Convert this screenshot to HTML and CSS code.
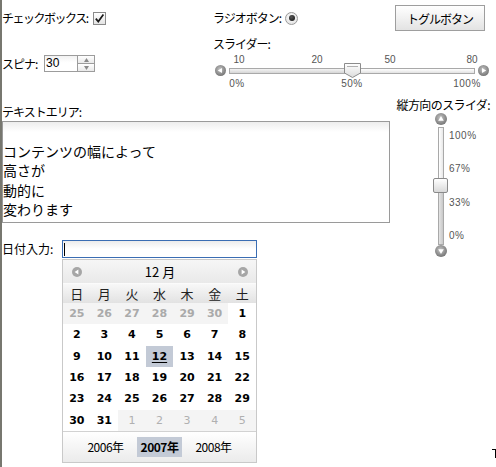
FILE: index.html
```html
<!DOCTYPE html>
<html>
<head>
<meta charset="utf-8">
<link rel="stylesheet" href="styles.css">
</head>
<body>
<div class="page">
  <div class="top">
    <div class="col-left">
      <div class="row-check">
        <span class="lbl lbl-check">チェックボックス:</span>
        <span class="checkbox"><svg width="11" height="11" viewBox="0 0 11 11"><path d="M1.8,5.6 L4.3,8.6 L9.4,1.6" fill="none" stroke="#1a1a1a" stroke-width="1.7"/></svg></span>
      </div>
      <div class="row-spin">
        <span class="lbl lbl-spin">スピナ:</span>
        <span class="spinner">
          <span class="spin-val">30</span>
          <span class="spin-btns">
            <span class="spin-up"><svg width="5" height="4" viewBox="0 0 5 4"><polygon points="2.5,0 5,4 0,4" fill="#8a8a8a"/></svg></span>
            <span class="spin-down"><svg width="5" height="4" viewBox="0 0 5 4"><polygon points="0,0 5,0 2.5,4" fill="#8a8a8a"/></svg></span>
          </span>
        </span>
      </div>
    </div>
    <div class="col-right">
      <div class="row-radio">
        <div class="radio-wrap">
          <span class="lbl">ラジオボタン:</span>
          <span class="radio"><span class="radio-dot"></span></span>
        </div>
        <button class="toggle">トグルボタン</button>
      </div>
      <div class="lbl slider-lbl">スライダー:</div>
      <div class="hslider">
        <div class="hs-ticks">
          <span style="left:24px">10</span>
          <span style="left:102px">20</span>
          <span style="left:175px">50</span>
          <span style="left:257px">80</span>
        </div>
        <div class="hs-track-row">
          <svg class="hs-arrow" width="11" height="11" viewBox="0 0 11 11"><defs><radialGradient id="ga" cx="0.45" cy="0.4" r="0.6"><stop offset="0" stop-color="#c4c4c4"/><stop offset="1" stop-color="#767676"/></radialGradient></defs><circle cx="5.5" cy="5.5" r="5.5" fill="url(#ga)"/><polygon points="2.8,5.5 7,3 7,8" fill="#fff"/></svg>
          <div class="hs-track">
            <div class="hs-fill"></div>
            <svg class="hs-thumb" width="17" height="15" viewBox="0 0 17 15"><defs><linearGradient id="gt" x1="0" y1="0" x2="0" y2="1"><stop offset="0" stop-color="#ffffff"/><stop offset="1" stop-color="#dcdcdc"/></linearGradient></defs><path d="M0.5,0.5 H16.5 V10 L8.5,14.5 L0.5,10 Z" fill="url(#gt)" stroke="#8c8c8c"/><line x1="3" y1="3.5" x2="14" y2="3.5" stroke="#b0b0b0"/></svg>
          </div>
          <svg class="hs-arrow" width="11" height="11" viewBox="0 0 11 11"><circle cx="5.5" cy="5.5" r="5.5" fill="url(#ga)"/><polygon points="8.2,5.5 4,3 4,8" fill="#fff"/></svg>
        </div>
        <div class="hs-labels">
          <span style="left:22px">0%</span>
          <span style="left:137px">50%</span>
          <span style="left:252px">100%</span>
        </div>
      </div>
    </div>
  </div>

  <div class="main">
    <div class="ta-col">
      <div class="lbl">テキストエリア:</div>
      <div class="textarea"><br>コンテンツの幅によって<br>高さが<br>動的に<br>変わります</div>
    </div>

    <div class="vs-col">
      <div class="lbl vs-lbl">縦方向のスライダ:</div>
      <div class="vslider">
        <svg width="12" height="12" viewBox="0 0 12 12"><defs><radialGradient id="gb" cx="0.45" cy="0.4" r="0.6"><stop offset="0" stop-color="#c4c4c4"/><stop offset="1" stop-color="#767676"/></radialGradient></defs><circle cx="6" cy="6" r="6" fill="url(#gb)"/><polygon points="6,3 3.2,7.8 8.8,7.8" fill="#fff"/></svg>
        <div class="vs-track">
          <div class="vs-upper"></div>
          <div class="vs-lower"></div>
        </div>
        <svg width="12" height="12" viewBox="0 0 12 12"><circle cx="6" cy="6" r="6" fill="url(#gb)"/><polygon points="6,9 3.2,4.2 8.8,4.2" fill="#fff"/></svg>
        <div class="vs-thumb"></div>
        <span class="vs-label" style="top:17px">100%</span>
        <span class="vs-label" style="top:50px">67%</span>
        <span class="vs-label" style="top:84px">33%</span>
        <span class="vs-label" style="top:117px">0%</span>
      </div>
    </div>

    <div class="date-row">
      <span class="lbl-date">日付入力:</span>
      <span class="date-input"><span class="caret"></span></span>
    </div>

    <div class="calendar">
      <div class="cal-head">
        <svg width="10" height="10" viewBox="0 0 10 10"><circle cx="5" cy="5" r="5" fill="#a6a6a6"/><polygon points="2.6,5 6.4,2.6 6.4,7.4" fill="#fff"/></svg>
        <span class="cal-month">12 月</span>
        <svg width="10" height="10" viewBox="0 0 10 10"><circle cx="5" cy="5" r="5" fill="#a6a6a6"/><polygon points="7.4,5 3.6,2.6 3.6,7.4" fill="#fff"/></svg>
      </div>
      <div class="cal-days">
        <span>日</span><span>月</span><span>火</span><span>水</span><span>木</span><span>金</span><span>土</span>
      </div>
      <div class="cal-grid">
        <span class="prev">25</span><span class="prev">26</span><span class="prev">27</span><span class="prev">28</span><span class="prev">29</span><span class="prev">30</span><span>1</span>
        <span>2</span><span>3</span><span>4</span><span>5</span><span>6</span><span>7</span><span>8</span>
        <span>9</span><span>10</span><span>11</span><span class="sel"><u>12</u></span><span>13</span><span>14</span><span>15</span>
        <span>16</span><span>17</span><span>18</span><span>19</span><span>20</span><span>21</span><span>22</span>
        <span>23</span><span>24</span><span>25</span><span>26</span><span>27</span><span>28</span><span>29</span>
        <span>30</span><span>31</span><span class="next">1</span><span class="next">2</span><span class="next">3</span><span class="next">4</span><span class="next">5</span>
      </div>
      <div class="cal-foot">
        <span class="yr">2006年</span>
        <span class="yr cur">2007年</span>
        <span class="yr">2008年</span>
      </div>
    </div>
  </div>
  <div class="corner"></div>
</div>
</body>
</html>
```

FILE: styles.css
```css
* { box-sizing: border-box; }
html, body { margin: 0; padding: 0; background: #fff; }
body {
  font-family: "Noto Sans CJK JP", "Liberation Sans", sans-serif;
  font-size: 12px;
  color: #000;
}
.page {
  width: 496px;
  height: 467px;
  border-left: 2px solid #77776f;
  position: relative;
  overflow: hidden;
}
.lbl { letter-spacing: -1px; line-height: 14px; white-space: nowrap; }

/* top area */
.top { display: grid; grid-template-columns: 211px 283px; height: 97px; }

.row-check { margin-top: 11px; height: 14px; display: flex; align-items: center; }
.lbl-check { width: 91px; letter-spacing: -1.5px; }
.checkbox {
  width: 13px; height: 13px;
  border: 1px solid #8a8a8a;
  background: linear-gradient(#ffffff, #e4e4e4);
  display: flex; align-items: center; justify-content: center;
}

.row-spin { margin-top: 30px; height: 17px; display: flex; align-items: center; }
.lbl-spin { width: 42px; }
.spinner { display: flex; width: 51px; height: 17px; border: 1px solid #9c9c9c; }
.spin-val {
  flex: 1;
  padding-left: 1px;
  font-family: "Liberation Sans", sans-serif;
  font-size: 12px;
  line-height: 15px;
  background: linear-gradient(#f2f2f2, #ffffff 45%);
}
.spin-btns { width: 17px; border-left: 1px solid #9c9c9c; display: flex; flex-direction: column; }
.spin-btns span {
  flex: 1; display: flex; align-items: center; justify-content: center;
  background: linear-gradient(#ffffff, #e9e9e9);
}
.spin-up { border-bottom: 1px solid #9c9c9c; }

.row-radio {
  margin-top: 5px; height: 26px;
  display: flex; align-items: center; justify-content: space-between;
  padding-right: 11px;
}
.radio-wrap { display: flex; align-items: center; }
.radio {
  margin-left: 4px;
  width: 13px; height: 13px;
  border-radius: 50%;
  border: 1px solid #9a9a9a;
  background: radial-gradient(circle at 50% 40%, #ffffff, #dcdcdc);
  display: flex; align-items: center; justify-content: center;
}
.radio-dot {
  width: 6px; height: 6px; border-radius: 50%;
  background: radial-gradient(circle at 40% 35%, #555, #111);
}
.toggle {
  width: 90px; height: 26px;
  border: 1px solid #9e9e9e;
  border-radius: 0;
  background: linear-gradient(#ffffff, #e3e3e3);
  font-family: "Noto Sans CJK JP", sans-serif;
  font-size: 12px;
  letter-spacing: -1px;
  color: #000;
  padding: 0;
}
.slider-lbl { margin-top: 6px; }

.hslider { position: relative; margin-left: 2px; margin-top: 4px; width: 274px; }
.hs-ticks, .hs-labels { position: relative; }
.hs-ticks { height: 8px; }
.hs-labels { height: 11px; }
.hs-ticks span, .hs-labels span {
  position: absolute; top: 0;
  transform: translateX(-50%);
  font-family: "Liberation Sans", sans-serif;
  font-size: 10px; line-height: 10px;
  color: #555;
}
.hs-labels span { line-height: 11px; letter-spacing: 0.5px; }
.hs-track-row { display: flex; align-items: center; height: 15px; gap: 3px; }
.hs-arrow { display: block; flex: none; }
.hs-track {
  position: relative;
  width: 246px; height: 6px;
  border: 1px solid #a9a9a9;
  background: linear-gradient(#ffffff, #e2e2e2);
}
.hs-fill { width: 115px; height: 100%; background: linear-gradient(#f4f4f4, #d6d6d6); }
.hs-thumb { position: absolute; left: 114px; top: -6px; display: block; }

/* main area */
.main {
  display: grid;
  grid-template-columns: 388px 100px;
  grid-template-rows: 126px 35px auto;
}
.ta-col { grid-column: 1; grid-row: 1; padding-top: 8px; }
.textarea {
  margin-top: 2px;
  height: 102px;
  border: 1px solid #9a9a9a;
  background: linear-gradient(#ededed, #ffffff 10px);
  font-size: 14px;
  line-height: 19.5px;
  padding-left: 0;
  white-space: nowrap;
}

.vs-col { grid-column: 2; grid-row: 1 / span 2; padding-top: 1px; }
.vs-lbl { text-align: right; letter-spacing: -0.6px; }
.vslider {
  position: relative;
  margin-left: 43px; margin-top: 1px;
  width: 15px;
  display: flex; flex-direction: column; align-items: center;
}
.vslider svg { display: block; }
.vs-track {
  margin: 2px 0 0;
  width: 6px; height: 118px;
  border: 1px solid #a9a9a9;
  display: flex; flex-direction: column;
}
.vs-upper { height: 52px; background: linear-gradient(90deg, #ffffff, #e8e8e8); }
.vs-lower { flex: 1; background: linear-gradient(90deg, #e4e4e4, #c8c8c8); }
.vs-thumb {
  position: absolute; left: 0; top: 65px;
  width: 15px; height: 15px;
  border: 1px solid #8a8a8a;
  border-radius: 2px;
  background: linear-gradient(#ffffff, #d9d9d9);
}
.vs-label {
  position: absolute; left: 16px;
  font-family: "Liberation Sans", sans-serif;
  font-size: 10px; line-height: 11px;
  color: #555; letter-spacing: 0.5px;
  white-space: nowrap;
}

.date-row { grid-column: 1; grid-row: 2; padding-top: 17px; display: flex; align-items: center; height: 35px; }
.lbl-date { width: 60px; line-height: 18px; white-space: nowrap; }
.date-input {
  width: 195px; height: 18px;
  border: 1px solid #3a6db3;
  background: linear-gradient(#ececec, #ffffff 8px);
  display: flex; align-items: center;
  padding-left: 1px;
}
.caret { width: 1px; height: 13px; background: #000; }

.calendar {
  grid-column: 1; grid-row: 3;
  margin-left: 60px; margin-top: 1px;
  width: 195px;
  border: 1px solid #c9c9c9;
}
.cal-head {
  height: 23px;
  display: flex; align-items: center; justify-content: space-between;
  padding: 0 8px 0 9px;
  background: linear-gradient(#f6f6f6, #e9e9e9);
}
.cal-head svg { display: block; }
.cal-month { font-size: 13px; line-height: 16px; }
.cal-days {
  height: 20px;
  display: grid; grid-template-columns: repeat(7, 1fr);
  align-items: center;
  border-top: 1px solid #fbfbfb;
  background: linear-gradient(#f8f8f8, #e2e2e2);
}
.cal-days span { text-align: center; font-size: 13px; line-height: 18px; color: #222; }
.cal-grid {
  display: grid;
  grid-template-columns: repeat(7, 1fr);
  grid-auto-rows: 21.33px;
}
.cal-grid span {
  display: flex; align-items: center; justify-content: center;
  font-family: "DejaVu Sans", sans-serif;
  font-weight: bold;
  font-size: 11px;
  color: #000;
}
.cal-grid .prev { background: #f4f4f4; color: #aaa; }
.cal-grid .next { background: #f4f4f4; color: #b0b0b0; font-weight: normal; }
.cal-grid .sel { background: #c3cad6; }
.cal-grid .sel u { text-underline-offset: 2px; }
.cal-foot {
  height: 31px;
  border-top: 1px solid #d2d2d2;
  background: linear-gradient(#ffffff, #ebebeb);
  display: flex; align-items: center; justify-content: center;
  gap: 9px;
}
.yr { padding: 0 4px; font-size: 12px; line-height: 20px; letter-spacing: -0.5px; }
.yr.cur { font-weight: bold; background: #c3cad6; }

.corner {
  position: absolute; left: 490px; top: 449px;
  width: 4px; height: 9px;
  border-top: 1px solid #000;
  border-right: 1px solid #000;
}
```
